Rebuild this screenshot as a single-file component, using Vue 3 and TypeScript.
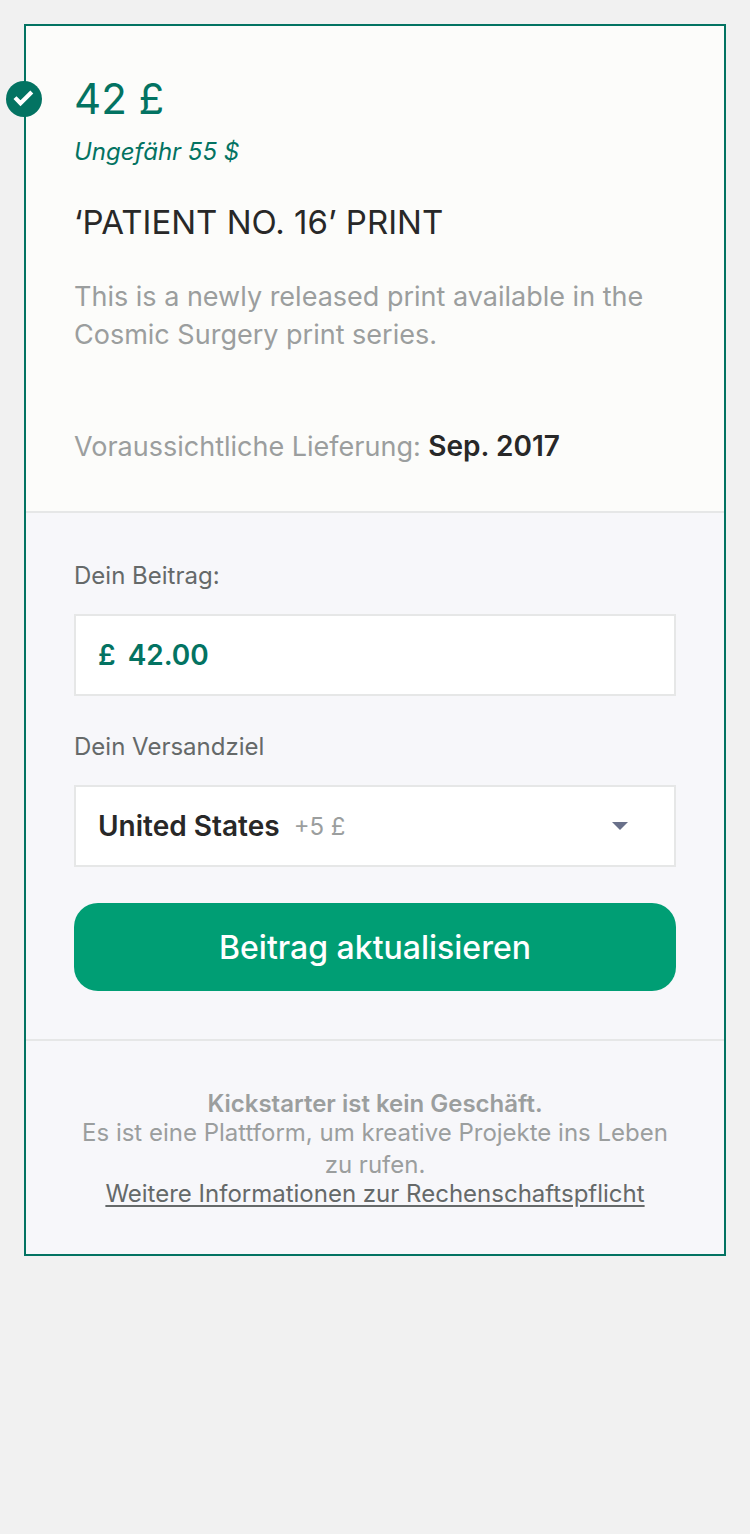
<script setup lang="ts">
import { ref } from 'vue'

interface Destination {
  code: string
  name: string
  cost: string
}

const destinations: Destination[] = [{ code: 'US', name: 'United States', cost: '+5 £' }]

const amount = ref<string>('42.00')
const destination = ref<Destination>(destinations[0])
</script>

<template>
  <main class="page">
    <article class="card">
      <span class="badge">
        <svg viewBox="0 0 36 36" aria-hidden="true">
          <path d="M9 16.6l5.5 5.6L25.8 11" fill="none" stroke="#fff" stroke-width="4.2" />
        </svg>
      </span>

      <section class="reward">
        <p class="price">42 £</p>
        <p class="converted">Ungefähr 55 $</p>
        <h1 class="title">‘PATIENT NO. 16’ PRINT</h1>
        <p class="description">
          This is a newly released print available in the Cosmic Surgery print series.
        </p>
        <p class="delivery">Voraussichtliche Lieferung: <strong>Sep. 2017</strong></p>
      </section>

      <form class="pledge" @submit.prevent>
        <label class="label" for="amount">Dein Beitrag:</label>
        <div class="field money">
          <span>£</span>
          <input id="amount" v-model="amount" type="text" inputmode="decimal" />
        </div>

        <label class="label" for="destination">Dein Versandziel</label>
        <div class="field">
          <select id="destination" v-model="destination">
            <option v-for="item in destinations" :key="item.code" :value="item">{{ item.name }}</option>
          </select>
          <span class="cost">{{ destination.cost }}</span>
          <svg class="arrow" viewBox="0 0 16 8" aria-hidden="true">
            <path d="M0 0h16L8 8z" fill="#69708a" />
          </svg>
        </div>

        <button class="submit" type="submit">Beitrag aktualisieren</button>
      </form>

      <footer class="notice">
        <strong>Kickstarter ist kein Geschäft.</strong>
        <p>Es ist eine Plattform, um kreative Projekte ins Leben zu rufen.</p>
        <a href="#">Weitere Informationen zur Rechenschaftspflicht</a>
      </footer>
    </article>
  </main>
</template>

<style>
body {
  margin: 0;
  background: #f1f1f1;
}
</style>

<style scoped>
* {
  box-sizing: border-box;
}

.page {
  padding: 24px;
  font-family: Inter, "Liberation Sans", sans-serif;
  color: #282828;
}

.card {
  position: relative;
  border: 2px solid #037362;
  background: #f7f7fa;
}

.badge {
  position: absolute;
  top: 55px;
  left: -20px;
  width: 36px;
  height: 36px;
  border-radius: 50%;
  background: #037362;
}

.badge svg {
  display: block;
}

.reward {
  padding: 48px 48px 45px;
  background: #fcfcfa;
  border-bottom: 2px solid #e6e7e7;
}

.reward p,
.title {
  margin: 0;
  font-weight: 400;
}

.reward .price {
  font-size: 42px;
  line-height: 50px;
  color: #037362;
}

.reward .converted {
  margin-top: 12px;
  font-size: 24px;
  font-style: italic;
  line-height: 32px;
  color: #037362;
}

.title {
  margin-top: 34px;
  font-size: 33px;
  line-height: 40px;
}

.description,
.delivery {
  font-size: 27px;
  line-height: 38px;
  color: #9b9e9e;
}

.reward .description {
  margin-top: 36px;
}

.reward .delivery {
  margin-top: 73px;
}

.delivery strong {
  font-size: 28px;
  font-weight: 600;
  color: #282828;
}

.pledge {
  display: flex;
  flex-direction: column;
  padding: 47px 48px 48px;
  border-bottom: 2px solid #e6e7e7;
}

.label {
  margin-bottom: 22px;
  font-size: 24px;
  line-height: 32px;
  color: #656969;
}

.field {
  display: flex;
  align-items: center;
  height: 82px;
  margin-bottom: 36px;
  padding: 0 22px;
  border: 2px solid #e6e7e7;
  background: #fff;
  font-size: 28px;
  font-weight: 600;
}

.field + .label {
  margin-top: -1px;
}

.money {
  gap: 12px;
  color: #037362;
}

.field input,
.field select {
  min-width: 0;
  margin: 0;
  padding: 0;
  border: 0;
  outline: 0;
  background: transparent;
  color: inherit;
  font: inherit;
}

.field input {
  flex: 1;
}

.field select {
  appearance: none;
  field-sizing: content;
}

.cost {
  margin-left: 14px;
  font-size: 24px;
  font-weight: 400;
  color: #9b9e9e;
}

.arrow {
  width: 16px;
  height: 8px;
  margin: 0 24px 0 auto;
}

.submit {
  height: 88px;
  padding: 0 24px;
  border: 0;
  border-radius: 24px;
  background: #009e74;
  color: #fff;
  font-family: inherit;
  font-size: 32px;
  font-weight: 500;
}

.notice {
  display: flex;
  flex-direction: column;
  align-items: center;
  padding: 50px 48px 47px;
  font-size: 24px;
  line-height: 26px;
  text-align: center;
  color: #9b9e9e;
}

.notice strong {
  font-weight: 600;
}

.notice p {
  margin: 0;
  line-height: 32px;
}

.notice a {
  color: #656969;
  text-decoration: underline;
  text-decoration-thickness: 2px;
  text-underline-offset: 3px;
}
</style>
